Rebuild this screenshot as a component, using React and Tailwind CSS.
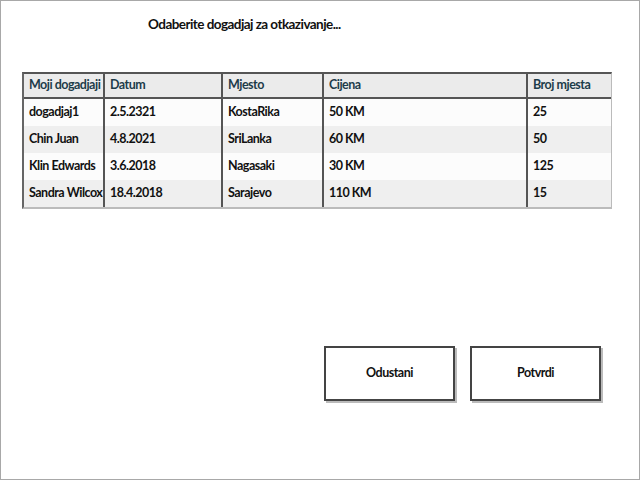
import React from "react";

const COLS = [
  { label: "Moji dogadjaji", w: "w-[81px]" },
  { label: "Datum", w: "w-[118px]" },
  { label: "Mjesto", w: "w-[101px]" },
  { label: "Cijena", w: "w-[204px]" },
  { label: "Broj mjesta", w: "flex-1" },
];

const ROWS = [
  ["dogadjaj1", "2.5.2321", "KostaRika", "50 KM", "25"],
  ["Chin Juan", "4.8.2021", "SriLanka", "60 KM", "50"],
  ["Klin Edwards", "3.6.2018", "Nagasaki", "30 KM", "125"],
  ["Sandra Wilcox", "18.4.2018", "Sarajevo", "110 KM", "15"],
];

export default function App() {
  return (
    <div
      className="w-[640px] h-[480px] border border-[#a8a8a8] bg-white relative flex flex-col text-[#111]"
      style={{ fontFamily: "Lato, 'DejaVu Sans', sans-serif" }}
    >
      <div className="pl-[147px] pt-[13px] h-[71px] text-[13.5px] font-bold tracking-[-0.55px] whitespace-nowrap">
        Odaberite dogadjaj za otkazivanje...
      </div>

      <div className="ml-[21px] w-[590px] border-t-2 border-t-[#555] border-l-2 border-l-[#666] border-r border-r-[#bbb] border-b-2 border-b-[#bbb]">
        <div className="flex h-[25px] bg-[#ebebeb] border-b-2 border-b-[#555]">
          {COLS.map((c, i) => (
            <div
              key={c.label}
              className={`${c.w} shrink-0 whitespace-nowrap overflow-hidden flex items-center pl-[5px] text-[12.5px] font-bold tracking-[-0.5px] text-[#1d3c4a] ${i < COLS.length - 1 ? "border-r-2 border-r-[#555]" : ""}`}
            >
              {c.label}
            </div>
          ))}
        </div>
        {ROWS.map((r, ri) => (
          <div key={ri} className={`flex h-[27px] ${ri % 2 ? "bg-[#efefef]" : "bg-[#fcfcfc]"}`}>
            {r.map((v, i) => (
              <div
                key={i}
                className={`${COLS[i].w} shrink-0 whitespace-nowrap overflow-hidden flex items-center pl-[5px] text-[12.5px] font-bold tracking-[-0.5px] ${i < COLS.length - 1 ? "border-r-2 border-r-[#555]" : ""}`}
              >
                {v}
              </div>
            ))}
          </div>
        ))}
      </div>

      <div className="flex gap-[15px] pl-[323px] mt-[137px]">
        {["Odustani", "Potvrdi"].map((t) => (
          <button
            key={t}
            className="w-[131px] h-[55px] bg-white border-2 border-[#444] shadow-[2px_2px_0_#bbb] text-[12.5px] font-bold tracking-[-0.5px] flex items-center justify-center"
          >
            {t}
          </button>
        ))}
      </div>
    </div>
  );
}
